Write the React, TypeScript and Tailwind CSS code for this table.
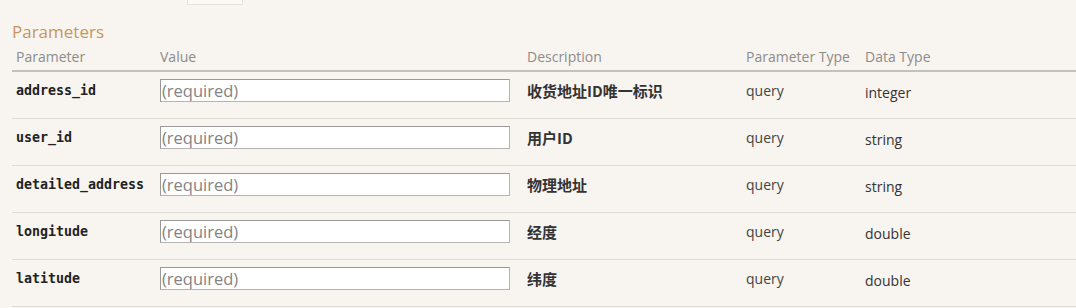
import React from 'react';

interface Param {
    name: string;
    description: string;
    paramType: string;
    dataType: string;
}

const params: Param[] = [
    { name: 'address_id', description: '收货地址ID唯一标识', paramType: 'query', dataType: 'integer' },
    { name: 'user_id', description: '用户ID', paramType: 'query', dataType: 'string' },
    { name: 'detailed_address', description: '物理地址', paramType: 'query', dataType: 'string' },
    { name: 'longitude', description: '经度', paramType: 'query', dataType: 'double' },
    { name: 'latitude', description: '纬度', paramType: 'query', dataType: 'double' }
];

const cols = 'grid grid-cols-[148px_367px_219px_119px_1fr]';

const ParamRow: React.FC<{ param: Param }> = ({ param }) => (
    <div className={`${cols} h-[47px] items-start pt-[7px] border-b border-[#dedad4]`}>
        <div className="pl-1 leading-[23px] text-[13.3px] font-bold text-[#222] font-['DejaVu_Sans_Mono',monospace]">
            {param.name}
        </div>
        <div className="pr-[16px]">
            <input
                type="text"
                placeholder="(required)"
                className="block w-[350px] h-[23px] bg-white border border-[#b4b4b4] border-t-[#999] border-l-[#999] px-[1px] text-[16.5px] leading-[21px] text-[#333] placeholder:text-[#838383] font-['Open_Sans',sans-serif] outline-none"
            />
        </div>
        <div className="leading-[23px] text-[15px] font-semibold text-[#333] font-['Noto_Sans_CJK_SC',sans-serif]">
            {param.description}
        </div>
        <div className="leading-[23px] text-[14px] text-[#444] font-['Open_Sans',sans-serif]">
            {param.paramType}
        </div>
        <div className="leading-[23px] pt-[2px] text-[14px] text-[#333] font-['Open_Sans',sans-serif]">
            {param.dataType}
        </div>
    </div>
);

export default function App() {
    return (
        <div className="w-[1076px] h-[308px] overflow-hidden bg-[#f8f4ef] font-['Open_Sans',sans-serif]">
            {/* tail of the block above, clipped at the top */}
            <div className="h-[5px] overflow-hidden flex items-end">
                <div className="ml-[187px] w-[56px] h-[14px] border border-[#e6e2dc] bg-[#fbf9f6]" />
            </div>
            <div className="pl-[12px]">
                <h4 className="mt-[15px] text-[17px] leading-[24px] text-[#c6975f]">Parameters</h4>
                <div className={`${cols} mt-[3px] pb-[4px] border-b-2 border-[#c4c0ba] text-[14px] leading-[19px] text-[#8c8c8c]`}>
                    <div className="pl-1">Parameter</div>
                    <div>Value</div>
                    <div>Description</div>
                    <div>Parameter Type</div>
                    <div>Data Type</div>
                </div>
                {params.map((p) => (
                    <ParamRow key={p.name} param={p} />
                ))}
            </div>
        </div>
    );
}
